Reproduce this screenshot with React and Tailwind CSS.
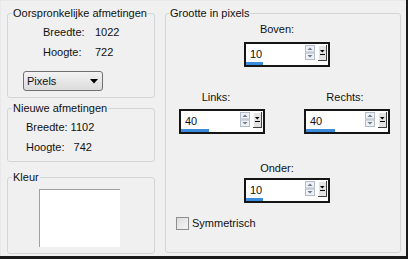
import React from "react";

function Arrows() {
  return (
    <svg width="10" height="15" viewBox="0 0 10 15">
      <rect x="0.5" y="0.5" width="9" height="6.5" fill="#eef1f5" stroke="#b3bac8" />
      <rect x="0.5" y="8" width="9" height="6.5" fill="#eef1f5" stroke="#b3bac8" />
      <path d="M2.5 5 L5 2.5 L7.5 5 Z" fill="#6f7a8a" />
      <path d="M2.5 10 L5 12.5 L7.5 10 Z" fill="#6f7a8a" />
    </svg>
  );
}

function MoreBtn() {
  return (
    <svg width="9" height="16" viewBox="0 0 9 16">
      <rect x="0" y="0" width="9" height="16" fill="#404040" />
      <rect x="0" y="0" width="8" height="15" fill="#ffffff" />
      <rect x="1" y="1" width="7" height="14" fill="#e3e3e3" />
      <path d="M2 5 L6.5 5 L4.25 7.5 Z" fill="#000" />
      <rect x="2" y="9" width="5" height="1" fill="#000" />
    </svg>
  );
}

function Spin({ value, bar }) {
  return (
    <div className="w-[86px] h-[25px] border-2 border-[#151515] bg-white flex flex-col">
      <div className="flex flex-1 items-start">
        <span className="pl-[4px] pt-[3px] leading-[14px]">{value}</span>
        <div className="ml-auto mr-[1px] mt-[1px] flex items-start gap-[3px]">
          <Arrows />
          <MoreBtn />
        </div>
      </div>
      <div className="h-[3px] bg-[#3b8ddb]" style={{ width: bar }} />
    </div>
  );
}

export default function App() {
  return (
    <div className="w-[408px] h-[259px] bg-[#1a1a1a] font-['Liberation_Sans',Arial,sans-serif] text-[11px] leading-[14px] text-[#111]">
      <div className="w-[406px] h-[256px] bg-[#f0f0f0] border-t border-l border-[#e8e8e8] flex gap-[10px] pl-[6px] pt-[5px]">
        <div className="w-[148px] flex flex-col">
          <fieldset className="h-[92px] border border-[#d3d6d9] rounded-[3px] px-0">
            <legend className="ml-[4px] px-[1px]">Oorspronkelijke afmetingen</legend>
            <div className="mt-[5px] grid grid-cols-[52px_auto] gap-y-[6px] pl-[35px]">
              <span>Breedte:</span>
              <span>1022</span>
              <span>Hoogte:</span>
              <span>722</span>
            </div>
            <div className="mt-[12px] ml-[15px] w-[80px] h-[20px] rounded-[3px] border border-[#707070] bg-gradient-to-b from-[#f3f3f3] to-[#dcdcdc] flex items-center pl-[3px] pr-[4px]">
              <span>Pixels</span>
              <svg className="ml-auto" width="8" height="5" viewBox="0 0 8 5">
                <path d="M0 0 L8 0 L4 4.5 Z" fill="#000" />
              </svg>
            </div>
          </fieldset>
          <fieldset className="mt-[3px] h-[61px] border border-[#d3d6d9] rounded-[3px] px-0">
            <legend className="ml-[4px] px-[1px]">Nieuwe afmetingen</legend>
            <div className="mt-[5px] pl-[18px] flex flex-col gap-[6px]">
              <div>
                <span>Breedte:</span>
                <span className="ml-[3px]">1102</span>
              </div>
              <div>
                <span>Hoogte:</span>
                <span className="ml-[9px]">742</span>
              </div>
            </div>
          </fieldset>
          <fieldset className="mt-[8px] h-[84px] border border-[#d3d6d9] rounded-[3px] px-0">
            <legend className="ml-[4px] px-[1px]">Kleur</legend>
            <div className="mt-[5px] ml-[31px] w-[81px] h-[58px] bg-white border-t border-l border-[#a0a0a0]" />
          </fieldset>
        </div>
        <fieldset className="w-[236px] h-[247px] border border-[#d3d6d9] rounded-[3px] px-0">
          <legend className="ml-[3px] px-[1px]">Grootte in pixels</legend>
          <div className="flex flex-col">
            <div className="mt-[2px] ml-[78px] w-[86px] flex flex-col items-center">
              <span className="pr-[20px]">Boven:</span>
              <div className="mt-[6px]">
                <Spin value="10" bar={17} />
              </div>
            </div>
            <div className="mt-[23px] ml-[13px] flex gap-[39px]">
              <div className="w-[86px] flex flex-col items-center">
                <span className="pr-[12px]">Links:</span>
                <div className="mt-[5px]">
                  <Spin value="40" bar={28} />
                </div>
              </div>
              <div className="w-[86px] flex flex-col items-center">
                <span className="pr-[4px]">Rechts:</span>
                <div className="mt-[5px]">
                  <Spin value="40" bar={29} />
                </div>
              </div>
            </div>
            <div className="mt-[27px] ml-[78px] w-[86px] flex flex-col items-center">
              <span className="pr-[20px]">Onder:</span>
              <div className="mt-[3px]">
                <Spin value="10" bar={17} />
              </div>
            </div>
            <div className="mt-[13px] ml-[10px] flex items-center gap-[3px]">
              <div className="w-[13px] h-[13px] border border-[#8e8f8f] bg-gradient-to-br from-[#dcdcdc] to-[#f6f6f6]" />
              <span>Symmetrisch</span>
            </div>
          </div>
        </fieldset>
      </div>
    </div>
  );
}
